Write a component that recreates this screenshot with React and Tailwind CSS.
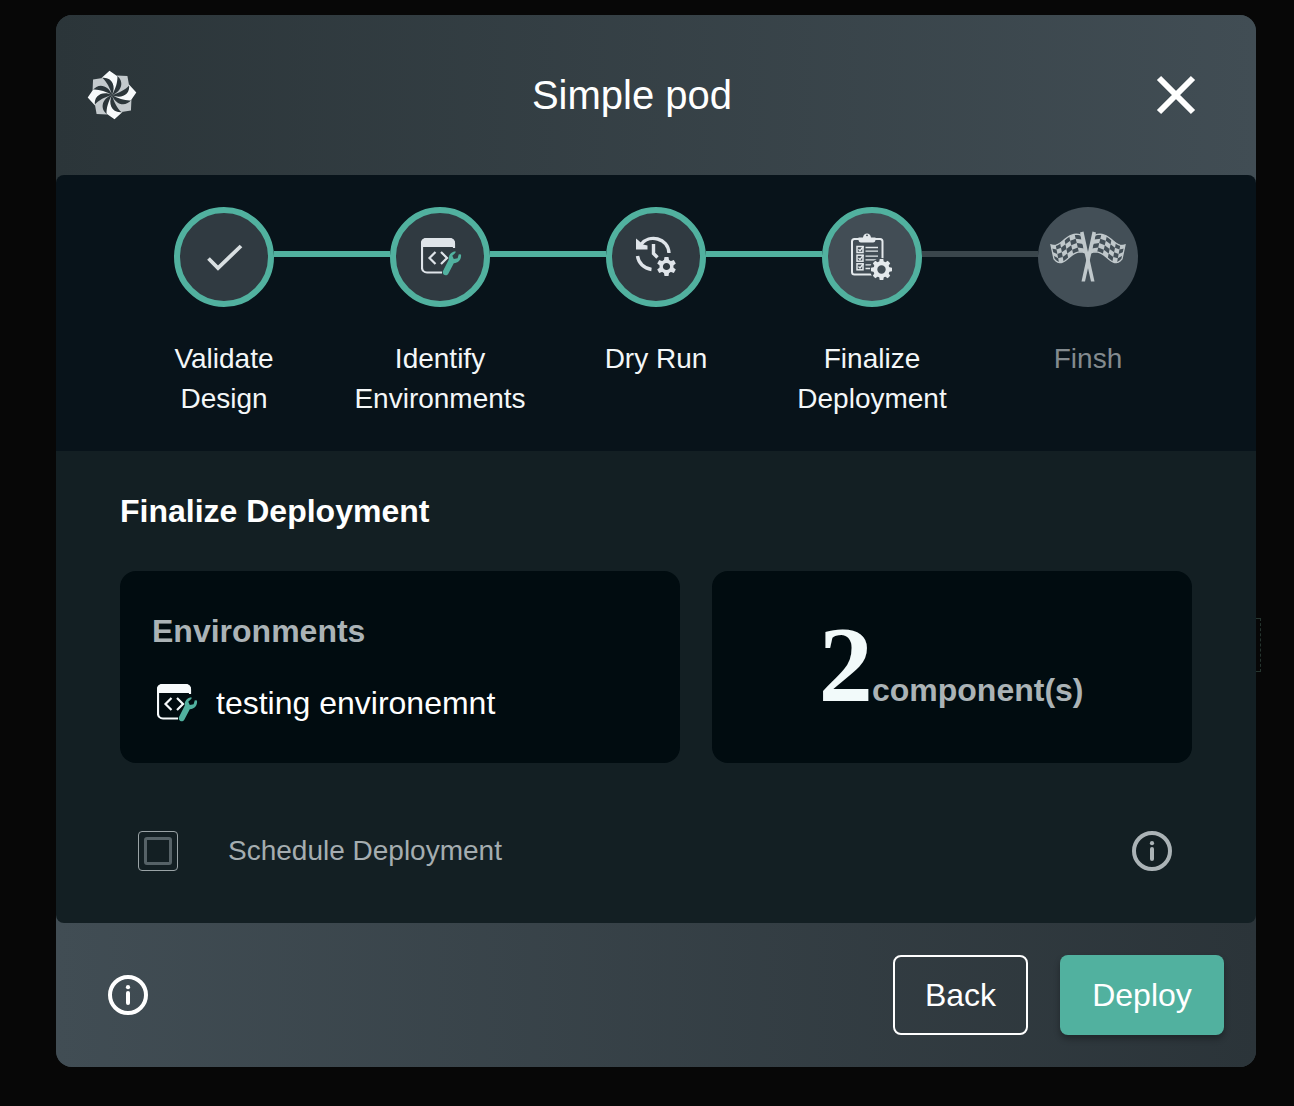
const BLADES = [0, 45, 90, 135, 180, 225, 270, 315];

function Logo() {
  return (
    <svg width="50" height="50" viewBox="-25 -25 50 50" className="block">
      {BLADES.map((angle, i) => (
        <path
          key={angle}
          transform={`rotate(${angle})`}
          fill={i % 2 === 0 ? '#f7fafb' : '#c3c9cc'}
          d="M-2.500 -24.300L5.400 -18.800C5.800 -13.500 3.600 -6 0 0C4.600 -9 -0.500 -18.800 -10.500 -17Z"
        />
      ))}
    </svg>
  );
}

function CodeWrench({ color }) {
  return (
    <svg width="42" height="40" viewBox="0 0 42 40" fill="none" className="block">
      <path d="M33 11V6.500A4.500 4.500 0 0 0 28.500 2H5.500A4.500 4.500 0 0 0 1 6.500V30.500A5 5 0 0 0 6 35.500H21" stroke={color} strokeWidth="2.200" />
      <path d="M0 10V6A5 5 0 0 1 5 1H29A5 5 0 0 1 34 6V10Z" fill={color} />
      <path d="M14.500 15L8.500 21L14.500 27M20 15L26 21L20 27" stroke={color} strokeWidth="2.200" />
      <path d="M34.500 14.300C30.500 14.500 27.200 18 27.800 22.500L22 34C20.800 37.500 25 40 27.300 36.800L32.800 26.300C37.300 26 40.700 22.500 40 17.500L37.800 17.200L36.600 21.300L32.800 22L31.300 18.700L34.500 15.800Z" fill="#51b19f" />
    </svg>
  );
}

function Check() {
  return (
    <svg width="36" height="28" viewBox="0 0 36 28" fill="none" className="mt-[2px] ml-px block">
      <path d="M1.500 14.500L11 24L34 2" stroke="#d9dfe1" strokeWidth="3.800" />
    </svg>
  );
}

const TEETH = [0, 60, 120, 180, 240, 300];

function History() {
  return (
    <svg width="42" height="42" viewBox="0 0 42 42" fill="none" className="block">
      <g stroke="#dfe4e9" strokeWidth="3.400">
        <path d="M6 8.500C14 -2 33 1.500 34 17" />
        <path d="M2.500 20C3.500 27 9 32.500 16.500 33.500" />
        <path d="M18.500 8V17.500L22.500 21.500" />
      </g>
      <path d="M1 2.500L3.500 4.500L8 8.500L12.500 9.500V13.500H1Z" fill="#dfe4e9" />
      <g transform="translate(31.500 30.500)">
        {TEETH.map((a) => (
          <path key={a} transform={`rotate(${a})`} d="M-2.600 -6L-2 -9.600H2L2.600 -6Z" fill="#dfe4e9" />
        ))}
        <circle r="5.300" stroke="#dfe4e9" strokeWidth="3.400" />
      </g>
    </svg>
  );
}

const GEAR_TEETH = [0, 45, 90, 135, 180, 225, 270, 315];

function Checklist() {
  return (
    <svg width="44" height="50" viewBox="0 0 44 50" fill="none" className="mr-px block">
      <rect x="2" y="7" width="30.500" height="35.500" rx="2.500" stroke="#e4e9ec" strokeWidth="2" />
      <path d="M8.500 5.500H13C13.500 0 20.500 0 21 5.500H25.500V7.500Q25.500 10.500 23 10.500H11Q8.500 10.500 8.500 7.500Z" fill="#e4e9ec" />
      <circle cx="17" cy="3.300" r="0.900" fill="#3c494f" />
      {[14.5, 23.2, 31.8].map((y) => (
        <g key={y} stroke="#e4e9ec">
          <rect x="7" y={y} width="6" height="6" strokeWidth="1.500" />
          <path d={`M8.500 ${y + 2.7}L10 ${y + 4.2}L13.500 ${y - 0.3}`} strokeWidth="1.400" />
          <path d={`M15.500 ${y + 1}H28M15.500 ${y + 4.7}H28`} strokeWidth="1.300" />
        </g>
      ))}
      <circle cx="31.500" cy="37.500" r="11.500" fill="#424d55" />
      <g transform="translate(31.500 37.500)">
        {GEAR_TEETH.map((a) => (
          <path key={a} transform={`rotate(${a})`} d="M-2.400 -7L-1.800 -10.500H1.800L2.400 -7Z" fill="#e4e9ec" />
        ))}
        <circle r="6.200" stroke="#e4e9ec" strokeWidth="4" />
      </g>
    </svg>
  );
}

const CLOTH_TOP = [[1, 14], [11, 18], [17, -1], [31, 4]];
const CLOTH_BOTTOM = [[4, 28], [14.5, 41], [21, 15], [35.5, 22]];

function bezier(p, t) {
  const s = 1 - t;
  return [0, 1].map(
    (k) => s * s * s * p[0][k] + 3 * s * s * t * p[1][k] + 3 * s * t * t * p[2][k] + t * t * t * p[3][k]
  );
}

// Point on the waving cloth: u runs from the free end to the pole, v from top to bottom.
function clothPoint(u, v) {
  const a = bezier(CLOTH_TOP, u);
  const b = bezier(CLOTH_BOTTOM, u);
  return [a[0] + (b[0] - a[0]) * v, a[1] + (b[1] - a[1]) * v];
}

const COLS = 6;
const ROWS = 4;

function clothEdge(v) {
  return Array.from({ length: 17 }, (_, i) => clothPoint(i / 16, v));
}

const toPath = (pts) => 'M' + pts.map((p) => p[0].toFixed(2) + ' ' + p[1].toFixed(2)).join('L') + 'Z';

function Flag() {
  const cells = [];
  for (let r = 0; r < ROWS; r++) {
    for (let c = 0; c < COLS; c++) {
      if ((r + c) % 2 === 1) {
        cells.push(
          toPath([
            clothPoint(c / COLS, r / ROWS),
            clothPoint((c + 1) / COLS, r / ROWS),
            clothPoint((c + 1) / COLS, (r + 1) / ROWS),
            clothPoint(c / COLS, (r + 1) / ROWS),
          ])
        );
      }
    }
  }
  const outline = toPath([...clothEdge(0), ...clothEdge(1).reverse()]);
  return (
    <g>
      <path d={outline} fill="#c0c8cb" />
      {cells.map((d) => (
        <path key={d} d={d} fill="#434f57" />
      ))}
      <path d={outline} fill="none" stroke="#c0c8cb" strokeWidth="1.300" />
      <path d="M30 1.500L33.500 0.500L44.500 50.500H41Z" fill="#c0c8cb" />
    </g>
  );
}

function Flags() {
  return (
    <svg width="76" height="52" viewBox="0 0 76 52" className="block">
      <Flag />
      <g transform="translate(76 0) scale(-1 1)">
        <Flag />
      </g>
    </svg>
  );
}

function Info({ color }) {
  return (
    <svg width="40" height="40" viewBox="0 0 40 40" fill="none" className="block">
      <circle cx="20" cy="20" r="18" stroke={color} strokeWidth="4" />
      <circle cx="20" cy="12.200" r="2.100" fill={color} />
      <path d="M20 18V28" stroke={color} strokeWidth="4" strokeLinecap="round" />
    </svg>
  );
}

const STEPS = [
  { label: ['Validate', 'Design'], icon: <Check />, fill: 'bg-[#303a41]' },
  { label: ['Identify', 'Environments'], icon: <div className="pl-[3px]"><CodeWrench color="#dfe4e9" /></div>, fill: 'bg-[#303a41]' },
  { label: ['Dry Run'], icon: <History />, fill: 'bg-[#303a41]' },
  { label: ['Finalize', 'Deployment'], icon: <Checklist />, fill: 'bg-[#424d55]' },
  { label: ['Finsh'], icon: <Flags />, fill: 'bg-[#434f57]', pending: true },
];

function Step({ step, last, nextPending }) {
  return (
    <div className="flex w-[216px] flex-col items-center">
      <div className="flex w-full items-center">
        <div className="w-[58px] shrink-0" />
        <div
          className={
            'flex size-[100px] shrink-0 items-center justify-center rounded-full ' +
            step.fill +
            (step.pending ? '' : ' border-[6px] border-[#51b19f]')
          }
        >
          {step.icon}
        </div>
        {!last && (
          <div
            className={
              '-mr-[58px] mb-[6px] h-[6px] w-[116px] shrink-0 ' + (nextPending ? 'bg-[#3a464c]' : 'bg-[#51b19f]')
            }
          />
        )}
      </div>
      <div className={'mt-8 text-center text-[28px] leading-[40px] ' + (step.pending ? 'text-[#838a8e]' : 'text-[#f4f7f8]')}>
        {step.label.map((line) => (
          <div key={line}>{line}</div>
        ))}
      </div>
    </div>
  );
}

export default function App() {
  return (
    <div className="flex h-[1106px] w-[1294px] items-start overflow-hidden bg-[#070707] pt-[15px] pl-14 font-['Liberation_Sans',Arial,sans-serif] text-white">
      <div className="flex h-[1052px] w-[1200px] shrink-0 flex-col overflow-hidden rounded-2xl bg-[#2e383d]">
        <header className="-mb-2 flex h-[168px] shrink-0 items-center justify-between bg-linear-to-r from-[#2b3539] to-[#414d54] pr-[60px] pb-2 pl-[31px]">
          <Logo />
          <h1 className="pr-[29px] text-[40px] leading-[48px]">Simple pod</h1>
          <svg width="40" height="40" viewBox="0 0 40 40" fill="none" className="block">
            <path d="M3 3L37 37M37 3L3 37" stroke="#ffffff" strokeWidth="6" />
          </svg>
        </header>

        <section className="z-10 flex h-[276px] shrink-0 justify-center rounded-t-lg bg-[#08131a] pt-8">
          {STEPS.map((step, i) => (
            <Step key={step.label[0]} step={step} last={i === STEPS.length - 1} nextPending={STEPS[i + 1]?.pending} />
          ))}
        </section>

        <main className="z-10 h-[472px] shrink-0 rounded-b-lg bg-[#131f23] px-16 pt-10">
          <h2 className="text-[32px] leading-[40px] font-bold">Finalize Deployment</h2>
          <div className="mt-10 flex gap-8">
            <div className="h-48 w-[560px] rounded-2xl bg-[#010c10] px-8 pt-10">
              <h3 className="text-[32px] leading-[40px] font-bold text-[#abb3b6]">Environments</h3>
              <div className="mt-[29px] flex items-center gap-[17px] pl-[5px]">
                <CodeWrench color="#f7fbfc" />
                <span className="text-[32px] leading-[46px]">testing environemnt</span>
              </div>
            </div>
            <div className="flex h-48 w-[480px] items-baseline justify-center rounded-2xl bg-[#010c10] pt-[38px] pr-[2px]">
              <span className="-mr-px font-['Liberation_Serif',serif] text-[109px] leading-[112px] font-bold text-[#f2fafa]">2</span>
              <span className="text-[32px] leading-[40px] font-bold text-[#abb3b6]">component(s)</span>
            </div>
          </div>
          <div className="mt-[68px] flex items-center pr-5 pl-[18px]">
            <div className="flex size-10 items-center justify-center rounded-[4px] border border-[#9aa3a6]">
              <div className="size-7 rounded-[3px] border-[3px] border-[#566267]" />
            </div>
            <span className="ml-[50px] grow text-[28px] leading-[40px] text-[#a5adb0]">Schedule Deployment</span>
            <Info color="#abb3b6" />
          </div>
        </main>

        <footer className="-mt-2 flex h-[152px] shrink-0 items-center bg-linear-to-r from-[#414d54] to-[#2b3439] pt-2 pr-8 pl-[52px]">
          <Info color="#ffffff" />
          <button className="ml-auto h-20 w-[135px] rounded-lg border-2 border-white text-[32px]">Back</button>
          <button className="ml-8 h-20 w-[164px] rounded-lg bg-[#51b19f] text-[32px] shadow-[0_4px_6px_rgba(0,0,0,0.3)]">Deploy</button>
        </footer>
      </div>
      <div className="mt-[603px] h-[54px] w-[5px] shrink-0 border-y border-r border-dashed border-[#26352f]" />
    </div>
  );
}
